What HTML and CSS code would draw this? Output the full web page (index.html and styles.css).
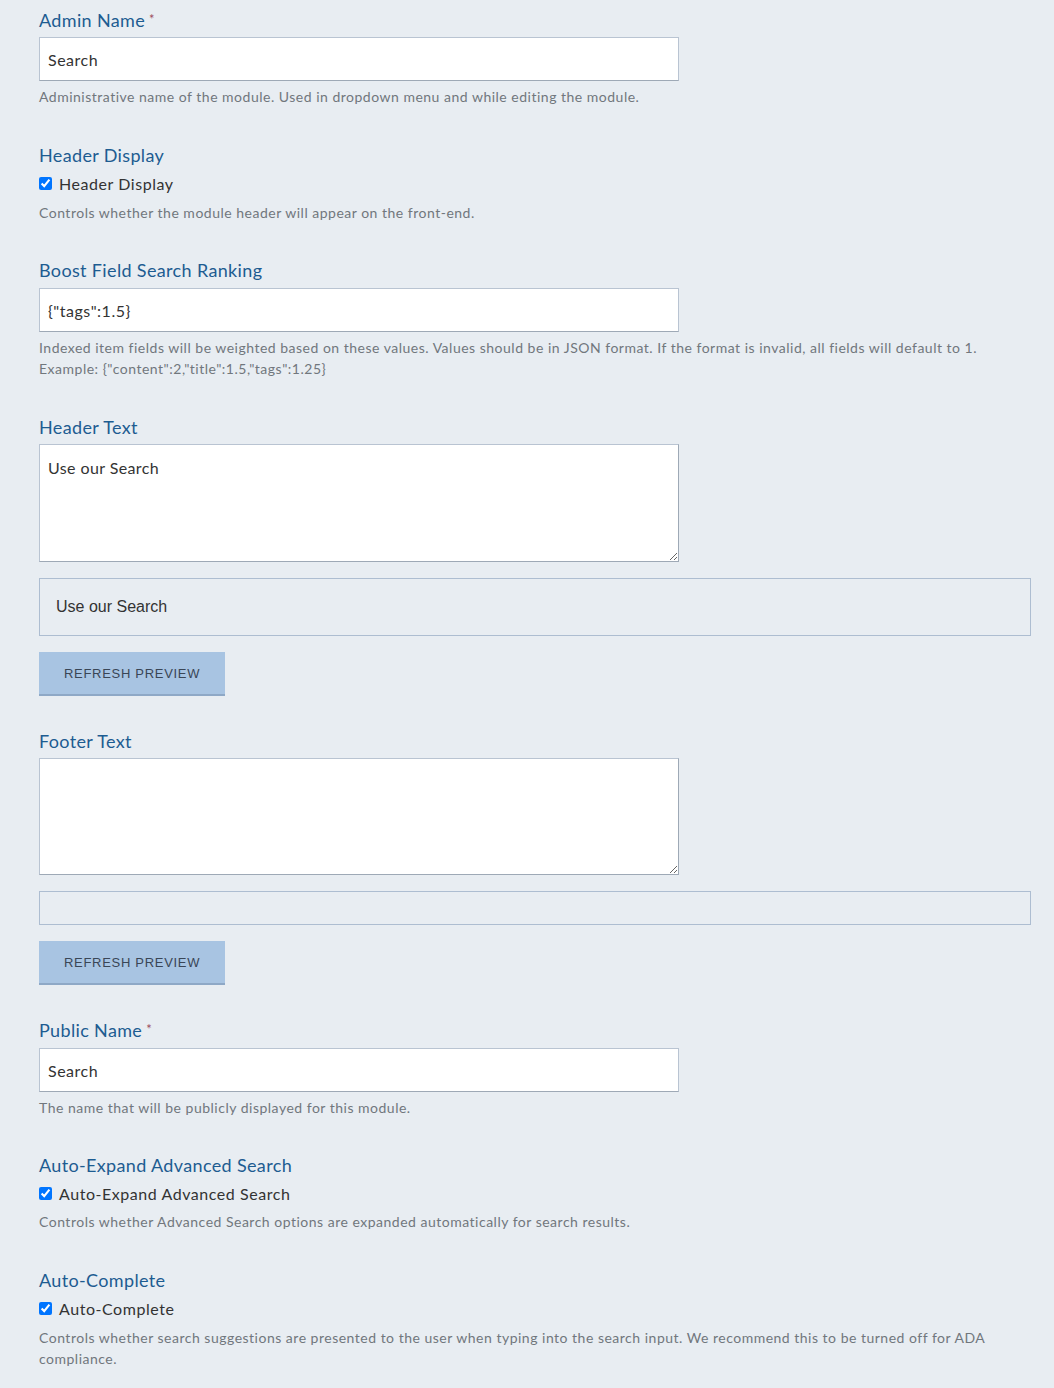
FILE: index.html
```html
<!DOCTYPE html>
<html lang="en">
<head>
<meta charset="utf-8">
<title>Module settings</title>
<link rel="stylesheet" href="styles.css">
</head>
<body>
<form class="form">
  <div class="group">
    <label class="label" for="admin-name">Admin Name<span class="req">*</span></label>
    <input class="input" id="admin-name" type="text" value="Search">
    <p class="help">Administrative name of the module. Used in dropdown menu and while editing the module.</p>
  </div>

  <div class="group group-check">
    <div class="label">Header Display</div>
    <label class="check"><input type="checkbox" checked><span>Header Display</span></label>
    <p class="help help-check">Controls whether the module header will appear on the front-end.</p>
  </div>

  <div class="group">
    <label class="label label-input" for="boost">Boost Field Search Ranking</label>
    <input class="input" id="boost" type="text" value='{"tags":1.5}'>
    <p class="help">Indexed item fields will be weighted based on these values. Values should be in JSON format. If the format is invalid, all fields will default to 1.<br>Example: {"content":2,"title":1.5,"tags":1.25}</p>
  </div>

  <div class="group group-btn">
    <label class="label" for="header-text">Header Text</label>
    <textarea class="textarea" id="header-text">Use our Search</textarea>
    <div class="preview">Use our Search</div>
    <button class="btn" type="button">Refresh Preview</button>
  </div>

  <div class="group group-btn">
    <label class="label" for="footer-text">Footer Text</label>
    <textarea class="textarea textarea-footer" id="footer-text"></textarea>
    <div class="preview"></div>
    <button class="btn" type="button">Refresh Preview</button>
  </div>

  <div class="group group-tight">
    <label class="label label-input" for="public-name">Public Name<span class="req">*</span></label>
    <input class="input" id="public-name" type="text" value="Search">
    <p class="help">The name that will be publicly displayed for this module.</p>
  </div>

  <div class="group">
    <div class="label">Auto-Expand Advanced Search</div>
    <label class="check"><input type="checkbox" checked><span>Auto-Expand Advanced Search</span></label>
    <p class="help help-check">Controls whether Advanced Search options are expanded automatically for search results.</p>
  </div>

  <div class="group group-check">
    <div class="label">Auto-Complete</div>
    <label class="check"><input type="checkbox" checked><span>Auto-Complete</span></label>
    <p class="help help-check">Controls whether search suggestions are presented to the user when typing into the search input. We recommend this to be turned off for ADA compliance.</p>
  </div>
</form>
</body>
</html>
```

FILE: styles.css
```css
html, body {
  margin: 0;
  padding: 0;
  background: #e8edf2;
}

body {
  font-family: Lato, "Open Sans", "Noto Sans", sans-serif;
  color: #333;
}

.form {
  padding: 8px 23px 0 39px;
}

.group {
  margin-bottom: 36px;
}

.group-check,
.group-tight {
  margin-bottom: 35px;
}

.group-btn {
  margin-bottom: 33px;
}

.label {
  display: block;
  font-size: 18px;
  line-height: 24px;
  letter-spacing: 0.35px;
  color: #1d5c91;
  margin-bottom: 5px;
}

.label-input {
  margin-bottom: 6px;
}

.req {
  color: #9b4d5e;
  font-size: 13px;
  margin-left: 4px;
  vertical-align: top;
  position: relative;
  top: -1px;
}

.input {
  display: block;
  box-sizing: border-box;
  width: 640px;
  height: 44px;
  margin: 0;
  padding: 0 8px;
  background: #fff;
  border: 1px solid #b9c4d2;
  border-bottom-color: #9ea9b6;
  border-radius: 0;
  font-family: inherit;
  font-size: 16px;
  color: #333;
  letter-spacing: 0.5px;
}

.textarea {
  display: block;
  box-sizing: border-box;
  width: 640px;
  height: 118px;
  margin: 0 0 16px;
  padding: 12px 8px;
  background: #fff;
  border: 1px solid #b9c4d2;
  border-bottom-color: #9ea9b6;
  border-right-color: #9ea9b6;
  border-radius: 0;
  font-family: inherit;
  font-size: 16px;
  line-height: 22px;
  color: #333;
  letter-spacing: 0.4px;
  resize: vertical;
}

.textarea-footer {
  height: 117px;
}

.help {
  margin: 5px 0 0;
  font-size: 14px;
  line-height: 21px;
  letter-spacing: 0.5px;
  color: #71777d;
}

.help-check {
  margin-top: 8px;
}

.group-check .help-check {
  margin-top: 9px;
}

.check {
  display: flex;
  align-items: center;
  gap: 7px;
  margin-top: 6px;
  height: 20px;
  font-size: 16px;
  color: #333;
  letter-spacing: 0.55px;
}

.check input {
  width: 13px;
  height: 13px;
  margin: 0;
}

.preview {
  box-sizing: border-box;
  min-height: 34px;
  padding: 16px 16px;
  border: 1px solid #adbdd1;
  font-family: "Liberation Sans", Arial, sans-serif;
  font-size: 16px;
  line-height: 24px;
  color: #333;
  margin-bottom: 16px;
}

.btn {
  display: block;
  box-sizing: border-box;
  height: 44px;
  padding: 0 25px;
  background: #a8c4e2;
  border: 0;
  border-bottom: 2px solid #8ea8c6;
  border-radius: 0;
  font-family: "Liberation Sans", Arial, sans-serif;
  font-size: 13px;
  letter-spacing: 0.7px;
  text-transform: uppercase;
  color: #3a4656;
}
```
